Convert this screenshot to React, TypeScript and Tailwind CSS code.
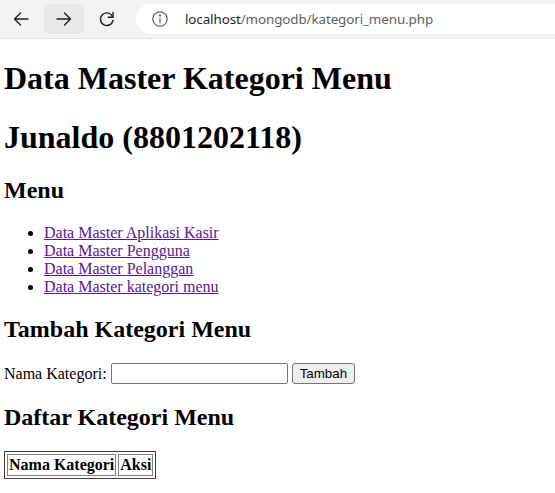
import React from "react";

function BackIcon() {
  return (
    <svg width="20" height="20" viewBox="0 0 20 20" fill="none" stroke="#1f1f1f" strokeWidth="1.4" strokeLinecap="round" strokeLinejoin="round">
      <path d="M17 10H3.5M9.5 4L3.5 10l6 6" />
    </svg>
  );
}

function ForwardIcon() {
  return (
    <svg width="20" height="20" viewBox="0 0 20 20" fill="none" stroke="#1f1f1f" strokeWidth="1.4" strokeLinecap="round" strokeLinejoin="round">
      <path d="M3 10h13.5M10.5 4l6 6-6 6" />
    </svg>
  );
}

function ReloadIcon() {
  return (
    <svg width="20" height="20" viewBox="0 0 20 20" fill="none" stroke="#1f1f1f" strokeWidth="1.4" strokeLinecap="round" strokeLinejoin="round">
      <path d="M15.8 8.2A6.3 6.3 0 1 0 16 11.5" />
      <path d="M16 3.5v4.8h-4.8" />
    </svg>
  );
}

function InfoIcon() {
  return (
    <svg width="18" height="18" viewBox="0 0 18 18" fill="none" stroke="#5f6368" strokeWidth="1.2">
      <circle cx="9" cy="9" r="7.2" />
      <path d="M9 8v5" strokeLinecap="round" />
      <circle cx="9" cy="5.6" r="0.5" fill="#5f6368" />
    </svg>
  );
}

export default function App() {
  return (
    <div className="min-h-[493px] bg-white">
      <div className="h-[39px] bg-[#f3f3f3] border-b border-[#e3e3e3] flex items-center">
        <div className="w-[40px] h-[30px] ml-[1px] flex items-center justify-center">
          <BackIcon />
        </div>
        <div className="w-[40px] h-[30px] ml-[3px] rounded-[5px] bg-[#e9e9e9] flex items-center justify-center">
          <ForwardIcon />
        </div>
        <div className="w-[40px] h-[30px] ml-[3px] flex items-center justify-center">
          <ReloadIcon />
        </div>
        <div className="ml-[9px] flex-1 h-[30px] bg-white rounded-l-full flex items-center pl-[15px]">
          <InfoIcon />
          <span className="ml-[16px] text-[13.4px] tracking-[-0.1px] text-[#5f5f5f]" style={{ fontFamily: "'Noto Sans', 'Open Sans', sans-serif" }}>
            <span className="text-[#1f1f1f]">localhost</span>/mongodb/kategori_menu.php
          </span>
        </div>
      </div>
      <div className="px-[4px] text-[16px] text-black leading-[normal]" style={{ fontFamily: "'Liberation Serif', 'Times New Roman', serif" }}>
        <div className="h-[1px]"></div>
        <h1 className="text-[32px] font-bold my-[21.44px] mt-[20.44px] leading-[normal]">Data Master Kategori Menu</h1>
        <h1 className="text-[32px] font-bold my-[21.44px] leading-[normal]">Junaldo (8801202118)</h1>
        <h2 className="text-[24px] font-bold my-[19.92px] leading-[normal]">Menu</h2>
        <ul className="list-disc pl-[40px] my-[16px]">
          <li><a href="#" className="underline text-[#551a8b]">Data Master Aplikasi Kasir</a></li>
          <li><a href="#" className="underline text-[#551a8b]">Data Master Pengguna</a></li>
          <li><a href="#" className="underline text-[#551a8b]">Data Master Pelanggan</a></li>
          <li><a href="#" className="underline text-[#551a8b]">Data Master kategori menu</a></li>
        </ul>
        <h2 className="text-[24px] font-bold my-[19.92px] leading-[normal]">Tambah Kategori Menu</h2>
        <form className="my-[16px] flex items-center" onSubmit={(e) => e.preventDefault()}>
          <span>Nama Kategori:</span>
          <input
            type="text"
            className="ml-[4px] w-[177px] h-[21px] border border-[#767676] rounded-[2px] px-[2px] text-[13.33px] bg-white"
            style={{ fontFamily: "'Liberation Sans', Arial, sans-serif" }}
          />
          <button
            type="submit"
            className="ml-[4px] h-[21px] px-[7px] border border-[#767676] rounded-[3px] bg-[#efefef] text-[13.33px] text-black"
            style={{ fontFamily: "'Liberation Sans', Arial, sans-serif" }}
          >
            Tambah
          </button>
        </form>
        <h2 className="text-[24px] font-bold my-[19.92px] leading-[normal]">Daftar Kategori Menu</h2>
        <table className="border-separate border-spacing-[2px] border border-[#3c3c3c]">
          <thead>
            <tr>
              <th className="border border-[#808080] p-[1px] font-bold">Nama Kategori</th>
              <th className="border border-[#808080] p-[1px] font-bold">Aksi</th>
            </tr>
          </thead>
        </table>
      </div>
    </div>
  );
}
